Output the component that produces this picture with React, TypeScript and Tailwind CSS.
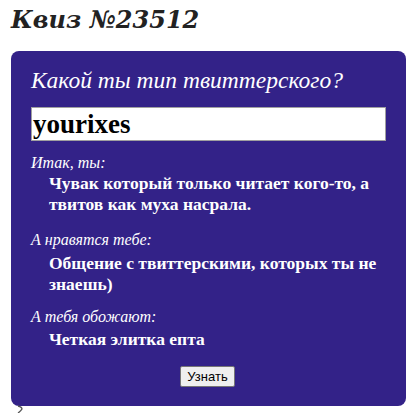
import React from "react";

export default function App() {
  const serif = "font-['Liberation_Serif','Times_New_Roman',serif]";
  return (
    <div className="w-[415px] h-[413px] bg-white overflow-hidden">
      <div className="font-['DejaVu_Serif',Georgia,serif] pt-[4px] pl-[11px] text-[24px] leading-[32px] font-bold italic text-[#222]">
        Квиз №23512
      </div>
      <div className="mt-[15px] ml-[11px] w-[395px] rounded-lg bg-[#332288] pl-[20px] pr-[20px] pt-[16px] pb-[19px] text-white">
        <div className={`${serif} italic text-[23.5px] leading-[26px] whitespace-nowrap`}>Какой ты тип твиттерского?</div>
        <div className="mt-[14px] h-[34px] w-[355px] border border-[#a0a0a0] bg-white flex items-center pl-[1px]">
          <span className={`${serif} font-bold text-[27px] leading-[30px] text-black`}>yourixes</span>
        </div>
        <div className={`${serif} italic text-[16px] leading-[18px] mt-[13px]`}>Итак, ты:</div>
        <div className={`${serif} font-bold text-[17.5px] leading-[21px] ml-[18px] mt-[1px] whitespace-nowrap`}>
          Чувак который только читает кого-то, а
          <br />
          твитов как муха насрала.
        </div>
        <div className={`${serif} italic text-[16px] leading-[18px] mt-[16px]`}>А нравятся тебе:</div>
        <div className={`${serif} font-bold text-[17.5px] leading-[21px] ml-[18px] mt-[4px] whitespace-nowrap`}>
          Общение с твиттерскими, которых ты не
          <br />
          знаешь)
        </div>
        <div className={`${serif} italic text-[16px] leading-[18px] mt-[13px]`}>А тебя обожают:</div>
        <div className={`${serif} font-bold text-[17.5px] leading-[21px] ml-[18px] mt-[3px] whitespace-nowrap`}>
          Четкая элитка епта
        </div>
        <div className="mt-[16px] flex justify-center pr-[2px]">
          <button className="h-[21px] w-[55px] rounded-[2px] border border-[#767676] bg-[#efefef] font-['Liberation_Sans',Arial,sans-serif] text-[13px] leading-[19px] text-black">
            Узнать
          </button>
        </div>
      </div>
      <svg className="ml-[16px] -mt-[1px]" width="10" height="8" viewBox="0 0 10 8">
        <path d="M2 1 Q6 2 6 4 Q5 6 2 8" stroke="#555" strokeWidth="1.3" fill="none" />
      </svg>
    </div>
  );
}
